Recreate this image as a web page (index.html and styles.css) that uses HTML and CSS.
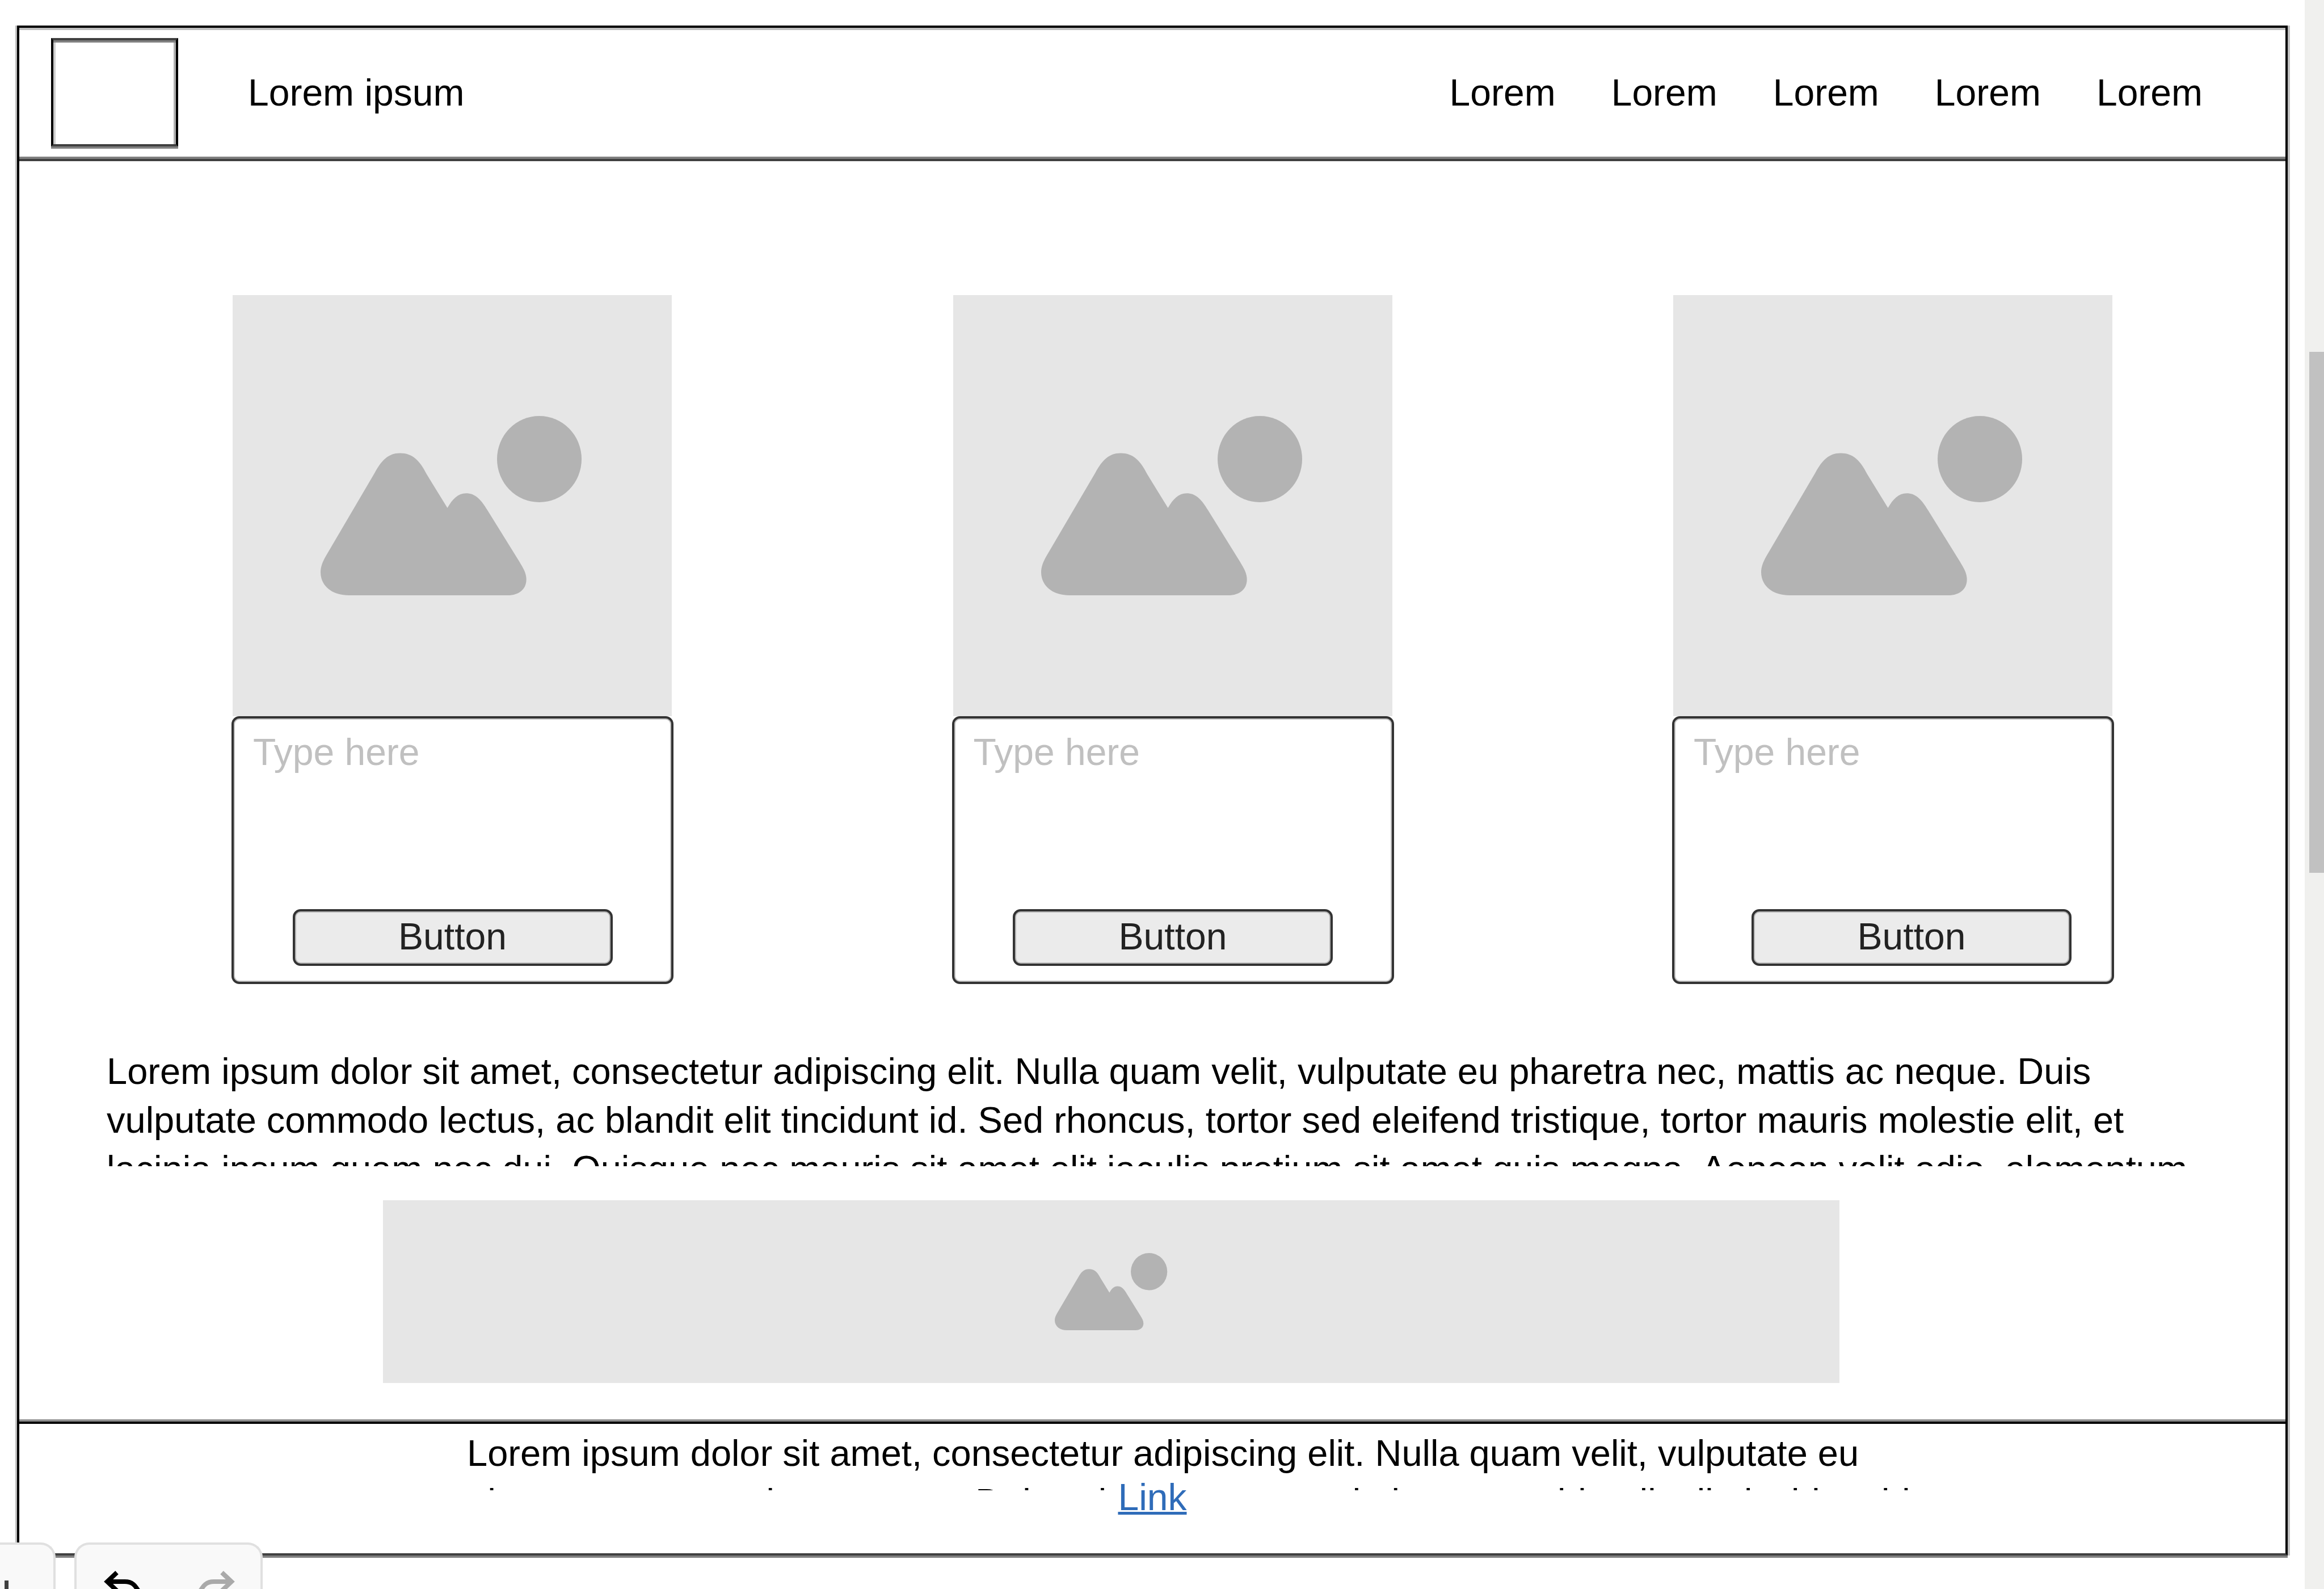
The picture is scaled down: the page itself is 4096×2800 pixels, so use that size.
FILE: index.html
```html
<!DOCTYPE html>
<html lang="en">
<head>
  <meta charset="utf-8">
  <title>Lorem ipsum</title>
  <link rel="stylesheet" href="styles.css">
</head>
<body>
  <svg class="symbols" aria-hidden="true">
    <symbol id="picture" viewBox="0 0 467 320">
      <ellipse cx="388" cy="77.500" rx="75" ry="76.500"/>
      <path d="M9 250L96 102C108 80 120 67 141 67C163 67 176 80 188 104L225 164C234 148 244 138 258 138C274 138 284 148 296 168L353 260C360 272 365 280 365 291C365 308 352 319 332 319H50C20 319 0 302 0 278C0 268 4 259 9 250Z"/>
    </symbol>
  </svg>

  <div class="workspace">
    <div class="frame">
      <header class="header">
        <div class="logo"></div>
        <span class="title">Lorem ipsum</span>
        <nav class="nav">
          <a href="#">Lorem</a>
          <a href="#">Lorem</a>
          <a href="#">Lorem</a>
          <a href="#">Lorem</a>
          <a href="#">Lorem</a>
        </nav>
      </header>

      <main class="main">
        <section class="cards">
          <article class="card">
            <div class="picture"><svg class="picture-icon"><use href="#picture"/></svg></div>
            <div class="field">
              <textarea class="field-text" placeholder="Type here" aria-label="First item"></textarea>
              <button class="button" type="button">Button</button>
            </div>
          </article>
          <article class="card">
            <div class="picture"><svg class="picture-icon"><use href="#picture"/></svg></div>
            <div class="field">
              <textarea class="field-text" placeholder="Type here" aria-label="Second item"></textarea>
              <button class="button" type="button">Button</button>
            </div>
          </article>
          <article class="card">
            <div class="picture"><svg class="picture-icon"><use href="#picture"/></svg></div>
            <div class="field">
              <textarea class="field-text" placeholder="Type here" aria-label="Third item"></textarea>
              <button class="button button-end" type="button">Button</button>
            </div>
          </article>
        </section>

        <p class="text intro">Lorem ipsum dolor sit amet, consectetur adipiscing elit. Nulla quam velit, vulputate eu pharetra nec, mattis ac neque. Duis vulputate commodo lectus, ac blandit elit tincidunt id. Sed rhoncus, tortor sed eleifend tristique, tortor mauris molestie elit, et lacinia ipsum quam nec dui. Quisque nec mauris sit amet elit iaculis pretium sit amet quis magna. Aenean velit odio, elementum</p>

        <div class="banner"><svg class="banner-icon"><use href="#picture"/></svg></div>
      </main>

      <footer class="footer">
        <p class="text note">Lorem ipsum dolor sit amet, consectetur adipiscing elit. Nulla quam velit, vulputate eu pharetra nec, mattis ac neque. Duis vulputate commodo lectus, ac blandit elit tincidunt id.</p>
        <a class="link" href="#">Link</a>
      </footer>
    </div>
  </div>

  <div class="scrollbar" aria-hidden="true"><div class="thumb"></div></div>

  <div class="toolbar">
    <div class="tools tools-zoom">
      <button class="tool" type="button" aria-label="Zoom in">
        <svg width="94" height="78" viewBox="0 0 94 78"><path d="M11.500 63V78" stroke="#404040" stroke-width="7"/></svg>
      </button>
    </div>
    <div class="tools">
      <button class="tool" type="button" aria-label="Undo">
        <svg width="162" height="78" viewBox="0 0 162 78"><path d="M71 49L54 65L71 81M54 65H85C98 65 103 71 110 83" fill="none" stroke="#000" stroke-width="8"/></svg>
      </button>
      <button class="tool" type="button" aria-label="Redo" disabled>
        <svg width="162" height="78" viewBox="0 0 162 78"><path d="M94 49L111 65L94 81M111 65H80C67 65 62 71 55 83" fill="none" stroke="#aaa" stroke-width="8"/></svg>
      </button>
    </div>
  </div>
</body>
</html>
```
FILE: styles.css
```css
* {
  box-sizing: border-box;
}

body {
  margin: 0;
  min-height: 100vh;
  display: grid;
  grid-template-columns: 1fr 34px;
  overflow: hidden;
  background: #fff;
  color: #000;
  font: 66px/76px "Liberation Sans", Arial, sans-serif;
}

p {
  margin: 0;
}

.symbols {
  position: absolute;
  width: 0;
  height: 0;
}

.workspace {
  padding: 45px 30px 0;
}

/* Page outline */
.frame {
  border: 4px solid #000;
  border-bottom-color: #404040;
  box-shadow: -3px 0 #bfbfbf, 4px 0 #bfbfbf, 0 4px #808080, inset 0 4px #bfbfbf;
}

.header {
  display: flex;
  align-items: center;
  min-height: 235px;
  padding: 0 146px 4px 56px;
  border-bottom: 4px solid #404040;
  box-shadow: inset 0 -4px #808080;
}

.logo {
  width: 224px;
  height: 191px;
  margin-right: 123px;
  border: 4px solid #000;
  border-top-color: #404040;
  border-bottom-color: #404040;
  box-shadow: 0 4px #808080, inset 0 4px #808080, inset 4px 0 #ccc, inset -4px 0 #b0b0b0;
}

.nav {
  display: flex;
  gap: 98px;
  margin-left: auto;
}

.nav a {
  color: inherit;
  text-decoration: none;
}

.main {
  padding: 236px 0 68px;
}

.cards {
  display: flex;
  justify-content: space-between;
  padding: 0 302px 0 374px;
}

.card {
  width: 779px;
}

.picture,
.banner {
  display: flex;
  align-items: center;
  justify-content: center;
  background: #e6e6e6;
}

.picture {
  height: 742px;
  margin: 0 3px 0 2px;
}

.picture-icon {
  width: 464px;
  height: 318px;
  fill: #b3b3b3;
}

.field {
  display: flex;
  flex-direction: column;
  align-items: center;
  padding: 21px 34px 28px;
  border: 4px solid #333;
  border-radius: 14px;
  box-shadow: inset 0 0 0 2px #c0c0c0;
}

.field-text {
  width: 100%;
  height: 315px;
  padding: 0;
  border: 0;
  outline: 0;
  resize: none;
  background: none;
  color: #000;
  font: inherit;
}

.field-text::placeholder {
  color: #c0c0c0;
}

.button {
  width: 564px;
  height: 100px;
  padding: 0 0 4px;
  border: 4px solid #333;
  border-radius: 14px;
  box-shadow: inset 0 0 0 2px #b8b8b8;
  background: #ebebeb;
  color: #222;
  font: inherit;
}

.button-end {
  align-self: flex-end;
  margin-right: 37px;
}

.text {
  overflow: hidden;
  font-size: 65px;
  line-height: 86px;
}

.intro {
  height: 210px;
  margin: 111px 139px 0 154px;
}

.banner {
  height: 322px;
  margin: 60px 786px 0 641px;
}

.banner-icon {
  width: 200px;
  height: 138px;
  fill: #b3b3b3;
}

.footer {
  min-height: 232px;
  padding-top: 9px;
  border-top: 4px solid #000;
  box-shadow: 0 -4px #8f8f8f;
  text-align: center;
}

.note {
  height: 108px;
  margin: 0 573px 0 789px;
  text-align: left;
}

.link {
  display: block;
  width: fit-content;
  margin: -26px auto 0;
  color: #2f6cb9;
  text-decoration: underline 5px;
}

.scrollbar {
  padding: 620px 0 0 8px;
  background: #f0f0ee;
}

.thumb {
  height: 918px;
  background: #c1c1c1;
}

/* Floating editor controls at the bottom edge */
.toolbar {
  position: fixed;
  left: 0;
  bottom: 0;
  display: flex;
  gap: 33px;
}

.tools {
  display: flex;
  border: 4px solid #e0e0e0;
  border-bottom: 0;
  border-radius: 26px 26px 0 0;
  background: #f9f9f9;
}

.tools-zoom {
  border-left: 0;
  border-radius: 0 26px 0 0;
}

.tool {
  display: flex;
  padding: 0;
  border: 0;
  background: none;
}
```
